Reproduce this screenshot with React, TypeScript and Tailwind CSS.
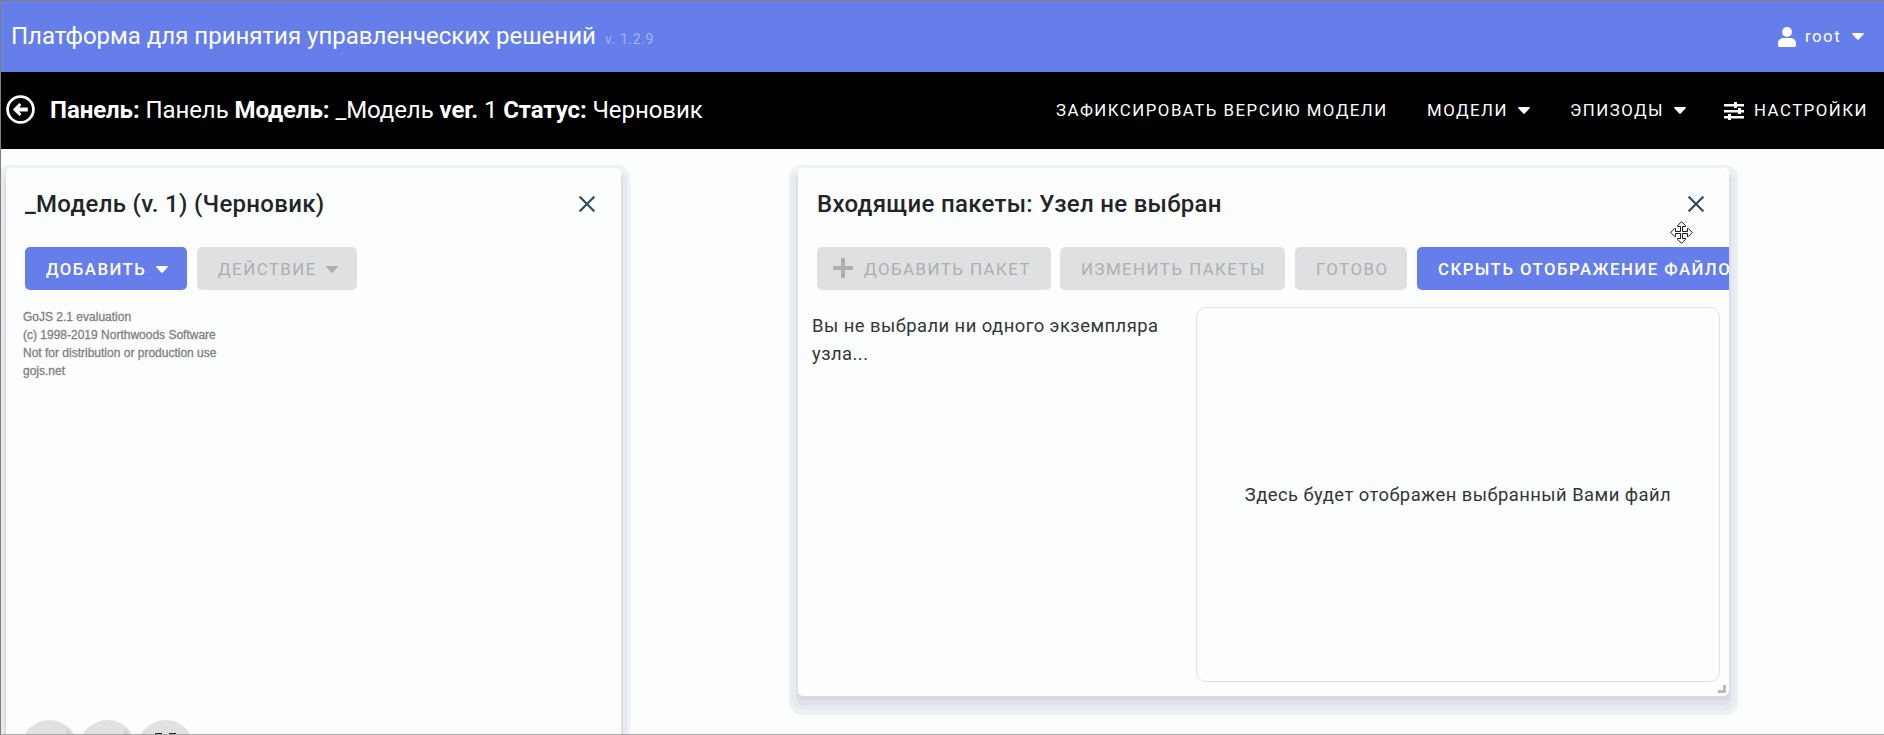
import React from "react";

function Caret({ className = "" }: { className?: string }) {
  return (
    <svg className={`h-[7px] w-3 shrink-0 ${className}`} viewBox="0 0 12 7" fill="currentColor">
      <path d="M.9 0h10.2c.8 0 1.1.8.6 1.3L6.7 6.6c-.4.4-1 .4-1.4 0L.3 1.3C-.2.8.1 0 .9 0z" />
    </svg>
  );
}

function BackIcon() {
  return (
    <svg className="mb-[2px] h-[29px] w-[29px] shrink-0" viewBox="0 0 29 29">
      <circle cx="14.5" cy="14.5" r="12.9" fill="none" stroke="#fff" strokeWidth="2.8" />
      <path d="M6.8 14.5l6.6-6.6 2 2-2.200 2.700h8.600v3.800h-8.600l2.200 2.700-2 2z" fill="#fff" />
    </svg>
  );
}

function UserIcon() {
  return (
    <svg className="h-5 w-[18px] shrink-0" viewBox="0 0 18 20" fill="currentColor">
      <circle cx="9" cy="5" r="5" />
      <path d="M5.2 11h7.6c3 0 5.2 2.4 5.2 5.4v1.8c0 1-.8 1.8-1.8 1.8H1.8C.8 20 0 19.2 0 18.200v-1.800C0 13.400 2.200 11 5.200 11z" />
    </svg>
  );
}

function SlidersIcon() {
  return (
    <svg className="h-[18px] w-5 shrink-0" viewBox="0 0 20 18" fill="currentColor">
      <path d="M0 2h20v2.500H0zM0 8h20v2.500H0zM0 14h20v2.500H0z" />
      <path d="M10 0h3v6h-3zM14 6h3v6h-3zM4 12h3v6H4z" />
    </svg>
  );
}

function CloseIcon() {
  return (
    <svg className="mb-px h-4 w-4 shrink-0" viewBox="0 0 16 16" fill="none" stroke="#34495e" strokeWidth="2.200">
      <path d="M.6.600l14.800 14.800M15.400.600L.600 15.400" />
    </svg>
  );
}

function MoveCursor() {
  return (
    <svg
      className="absolute left-[872px] top-[53px] h-[23px] w-[23px]"
      viewBox="0 0 23 23"
      fill="#fff"
      stroke="#000"
      strokeWidth=".9"
    >
      <path d="M11.500.700L15.500 4.700V5.500H12.500V10.500H17.500V7.500H18.300L22.300 11.500L18.300 15.500H17.500V12.500H12.500V17.500H15.500V18.300L11.500 22.300L7.500 18.300V17.500H10.500V12.500H5.500V15.500H4.700L.700 11.500L4.700 7.500H5.500V10.500H10.500V5.500H7.500V4.700Z" />
    </svg>
  );
}

const panelShadow =
  "shadow-[0_4px_0_0_#d7d9e4,0_7px_0_2px_#dfdfe3,0_8px_0_6px_#e7eaf2,0_10px_0_9px_#edf1f6,0_6px_0_9px_#edf2f6]";

function Button({
  children,
  className,
  disabled = false,
}: {
  children: React.ReactNode;
  className: string;
  disabled?: boolean;
}) {
  return (
    <button
      disabled={disabled}
      className={`flex h-[43px] shrink-0 items-center whitespace-nowrap rounded-[5px] pt-[2px] text-[16.800px] ${
        disabled
          ? "bg-[#dfe0e2] tracking-[1.500px] text-[#aeafae]"
          : "bg-[#667eea] font-medium tracking-[1.450px] text-white"
      } ${className}`}
    >
      {children}
    </button>
  );
}

export default function App() {
  return (
    <div className="flex h-[735px] w-[1884px] flex-col overflow-hidden border-b border-l border-t border-b-[#a9a9a9] border-l-[#808080] border-t-[#808080] bg-[#fcfefd] font-['Roboto',sans-serif]">
      <header className="flex h-[71px] shrink-0 items-center justify-between bg-[#667eea] pl-[10px] pr-5 text-white">
        <div className="flex items-baseline whitespace-nowrap pb-[2px]">
          <h1 className="w-[594px] text-[24px]">Платформа для принятия управленческих решений</h1>
          <span className="text-[14px] tracking-[0.600px] text-[#a3b2f2]">v. 1.2.9</span>
        </div>
        <div className="flex items-center text-[16.800px]">
          <UserIcon />
          <span className="ml-[9px] w-[47px] tracking-[1.500px]">root</span>
          <Caret />
        </div>
      </header>

      <nav className="flex h-[77px] shrink-0 items-center bg-black pl-[5px] text-white">
        <BackIcon />
        <div className="ml-[15px] w-[1006px] whitespace-nowrap pb-[2px] text-[24px] tracking-[-0.080px]">
          <b>Панель:</b> Панель <b>Модель:</b> _Модель <b>ver.</b> 1 <b>Статус:</b> Черновик
        </div>
        <div className="flex items-center whitespace-nowrap text-[16.800px] tracking-[1.500px]">
          <span className="w-[371px]">ЗАФИКСИРОВАТЬ ВЕРСИЮ МОДЕЛИ</span>
          <span className="w-[91px]">МОДЕЛИ</span>
          <Caret />
          <span className="ml-[40px] w-[104px]">ЭПИЗОДЫ</span>
          <Caret />
          <span className="ml-[38px] flex items-center">
            <SlidersIcon />
            <span className="ml-[10px]">НАСТРОЙКИ</span>
          </span>
        </div>
      </nav>

      <main className="flex flex-1 items-start overflow-hidden pl-[5px] pt-[19px]">
        <section className={`flex h-[640px] w-[615px] shrink-0 flex-col rounded-[5px] bg-[#fcfefd] ${panelShadow}`}>
          <div className="flex h-[72px] shrink-0 items-center justify-between pl-[19px] pr-[26px]">
            <h2 className="text-[24px] font-medium tracking-[0.300px] text-[#212529]">_Модель (v. 1) (Черновик)</h2>
            <CloseIcon />
          </div>
          <div className="mt-[7px] flex shrink-0 gap-[10px] pl-[19px]">
            <Button className="w-[162px] justify-between pl-[21px] pr-[19px]">
              ДОБАВИТЬ <Caret />
            </Button>
            <Button disabled className="w-[160px] justify-between pl-[21px] pr-[19px]">
              ДЕЙСТВИЕ <Caret />
            </Button>
          </div>
          <p className="mt-[18px] shrink-0 pl-[17px] font-['Liberation_Sans',sans-serif] text-[12px] leading-[18px] text-[#808080] [-webkit-text-stroke:0.300px_#808080]">
            GoJS 2.1 evaluation
            <br />
            (c) 1998-2019 Northwoods Software
            <br />
            Not for distribution or production use
            <br />
            gojs.net
          </p>
          <div className="mt-[340px] flex shrink-0 gap-px pl-[15px]">
            <span className="flex h-[57px] w-[57px] items-start justify-end rounded-full bg-[#e0e1e3] pr-[5px] pt-2">
              <svg className="h-2 w-2" viewBox="0 0 8 8">
                <path d="M2 0l6 8H0z" fill="#d1d2d3" />
              </svg>
            </span>
            <span className="flex h-[57px] w-[57px] items-start justify-end rounded-full bg-[#e0e1e3] pr-[5px] pt-2">
              <svg className="h-2 w-2" viewBox="0 0 8 8">
                <path d="M2 0l6 8H0z" fill="#d1d2d3" />
              </svg>
            </span>
            <span className="flex h-[57px] w-[57px] justify-center gap-[7px] rounded-full bg-[#e0e1e3] pt-[13px]">
              <i className="h-[7px] w-[7px] border-l-2 border-t-2 border-[#222]" />
              <i className="h-[7px] w-[7px] border-r-2 border-t-2 border-[#222]" />
            </span>
          </div>
        </section>

        <section
          className={`relative ml-[177px] h-[528px] w-[931px] shrink-0 rounded-[5px] bg-[#fcfefd] ${panelShadow}`}
        >
          <div className="flex h-full flex-col overflow-hidden">
            <div className="flex h-[72px] shrink-0 items-center justify-between pl-[19px] pr-[25px]">
              <h2 className="text-[24px] font-medium tracking-[0.300px] text-[#212529]">Входящие пакеты: Узел не выбран</h2>
              <CloseIcon />
            </div>
            <div className="mt-[7px] flex shrink-0 pl-[19px]">
              <Button disabled className="w-[234px] pl-4">
                <svg className="mb-[3px] mr-[11px] h-5 w-5" viewBox="0 0 20 20" fill="currentColor">
                  <path d="M8 1q0-1 1-1h2q1 0 1 1v7h7q1 0 1 1v2q0 1-1 1h-7v7q0 1-1 1H9q-1 0-1-1v-7H1q-1 0-1-1V9q0-1 1-1h7z" />
                </svg>
                ДОБАВИТЬ ПАКЕТ
              </Button>
              <Button disabled className="ml-[9px] w-[225px] pl-[21px]">
                ИЗМЕНИТЬ ПАКЕТЫ
              </Button>
              <Button disabled className="ml-[10px] w-[112px] pl-[21px]">
                ГОТОВО
              </Button>
              <Button className="ml-[10px] w-[350px] pl-[21px]">СКРЫТЬ ОТОБРАЖЕНИЕ ФАЙЛОВ</Button>
            </div>
            <div className="mt-[17px] flex">
              <p className="w-[398px] pl-[14px] pr-4 pt-[5px] text-[18.400px] leading-[28px] tracking-[0.460px] text-[#333637]">
                Вы не выбрали ни одного экземпляра узла...
              </p>
              <div className="flex h-[375px] w-[524px] items-center justify-center rounded-[10px] border border-[#dfe0e2]">
                <p className="text-[18.400px] tracking-[0.460px] text-[#333637]">Здесь будет отображен выбранный Вами файл</p>
              </div>
            </div>
          </div>
          <i className="absolute bottom-[3px] right-[3px] h-2 w-2 border-b-[3px] border-r-[3px] border-[#b9bcbc]" />
          <MoveCursor />
        </section>
      </main>
    </div>
  );
}
